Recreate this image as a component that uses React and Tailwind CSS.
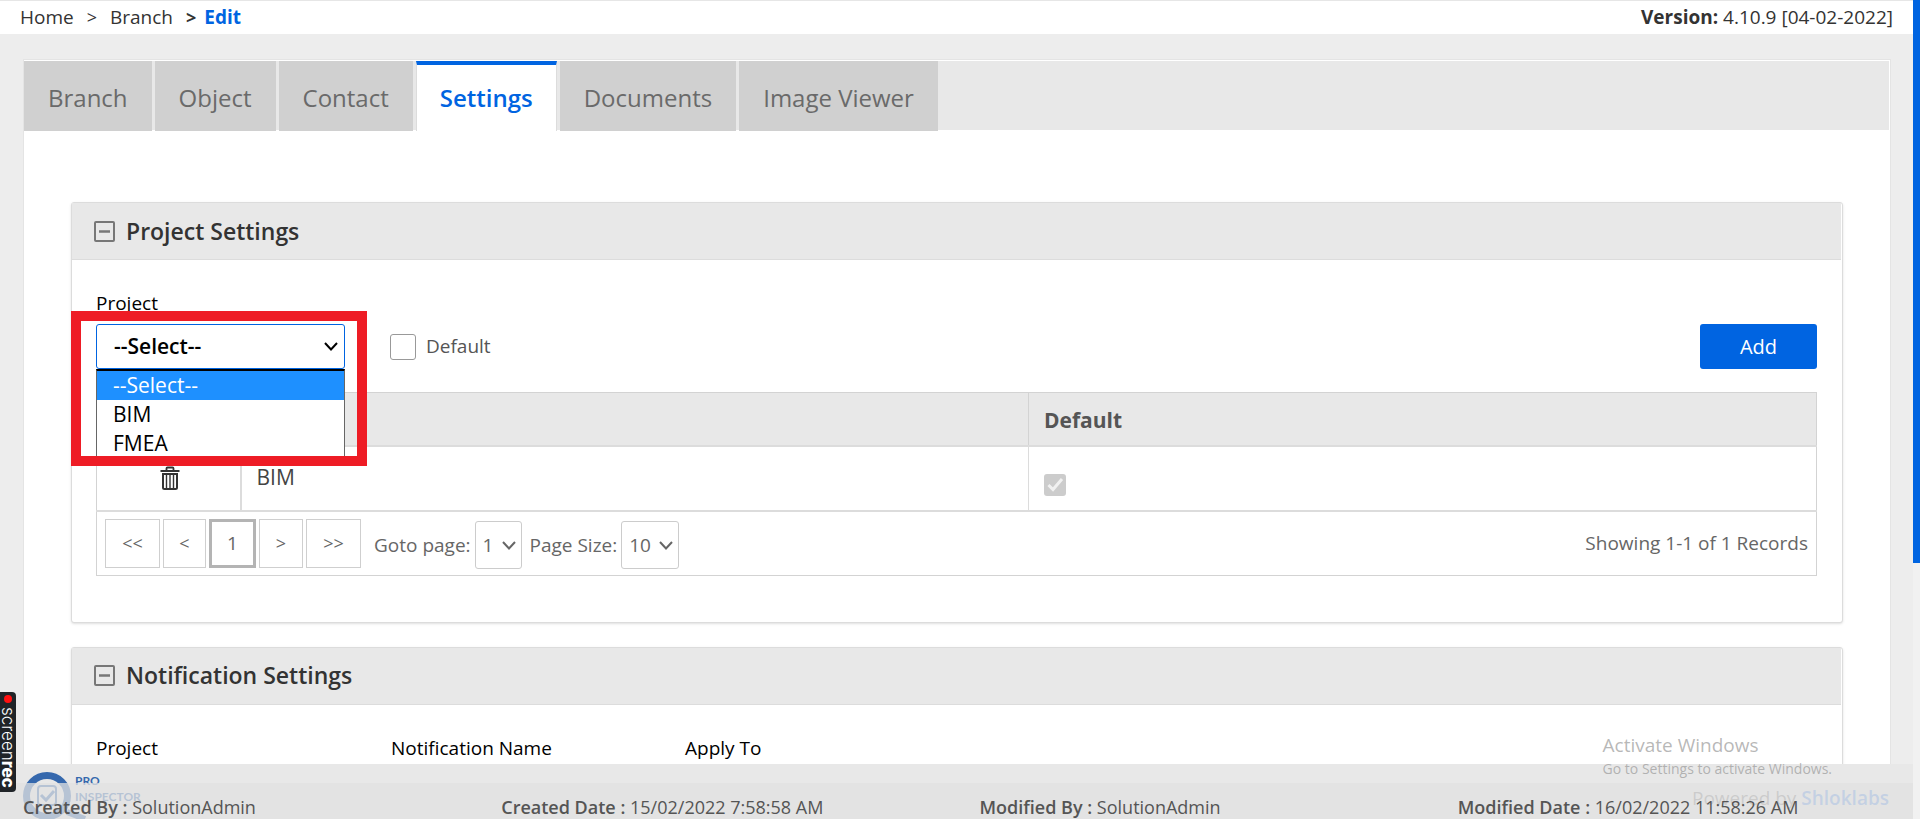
const tabs = ["Branch", "Object", "Contact", "Settings", "Documents", "Image Viewer"];
const pagerButton = "h-[49px] border border-[#cfcfcf] bg-white text-lg text-[#666]";

function CollapseIcon() {
  return (
    <svg viewBox="0 0 21 21" className="size-[21px]" fill="none" stroke="#777" strokeWidth="2" aria-hidden="true">
      <rect x="1" y="1" width="19" height="19" rx="1" />
      <path d="M5 10.5H16" strokeWidth="2.5" />
    </svg>
  );
}

function TrashIcon() {
  return (
    <svg viewBox="0 0 20 24" className="h-6 w-5" fill="none" stroke="#333" strokeWidth="2" aria-hidden="true">
      <path d="M0.5 5H19.5" />
      <path d="M6.500 5V2.500Q6.500 1.500 7.500 1.500H12.500Q13.500 1.500 13.500 2.500V5" strokeWidth="1.8" />
      <path d="M3 8V21.500Q3 23 4.500 23H15.500Q17 23 17 21.500V8Z" />
      <path d="M6.500 8V22M10 8V22M13.500 8V22" strokeWidth="1.4" />
    </svg>
  );
}

function Chevron() {
  return (
    <svg viewBox="0 0 14 9" className="h-[9px] w-[14px]" fill="none" stroke="currentColor" strokeWidth="2" aria-hidden="true">
      <path d="M1 1L7 7.5L13 1" />
    </svg>
  );
}

function Card({ title, children, className = "" }) {
  return (
    <section className={`rounded-[3px] border border-[#dcdcdc] bg-white shadow-sm ${className}`}>
      <h2 className="mr-px flex h-[57px] items-center gap-[11px] border-b border-[#dcdcdc] bg-[#e8e8e8] pl-[22px] text-[23px] font-semibold text-[#333]">
        <CollapseIcon />
        {title}
      </h2>
      {children}
    </section>
  );
}

function PageSelect({ id, label, value, className }) {
  return (
    <div className="flex items-center gap-1">
      <label htmlFor={id}>{label}</label>
      <div className="relative flex items-center">
        <select id={id} defaultValue={value} className={`h-12 appearance-none rounded-[3px] border border-[#ccc] bg-white pl-[7px] ${className}`}>
          <option>{value}</option>
        </select>
        <span className="pointer-events-none absolute right-[6px]"><Chevron /></span>
      </div>
    </div>
  );
}

export default function App() {
  return (
    <div className="relative flex h-screen overflow-hidden bg-[#ededed] font-['Open_Sans',sans-serif] text-[19px] text-black">
      <div className="flex min-w-0 flex-1 flex-col">
        <header className="flex h-[34px] shrink-0 items-start justify-between border-t border-[#e6e6e6] bg-white px-5 leading-8 text-[#333]">
          <nav className="flex">
            <a href="#home">Home</a>
            <span className="px-[13px] text-lg leading-8">&gt;</span>
            <a href="#branch">Branch</a>
            <span className="pr-2 pl-[13px] text-lg leading-8 font-bold">&gt;</span>
            <a href="#edit" className="font-bold text-[#0064e1]">Edit</a>
          </nav>
          <p><b>Version:</b> 4.10.9 [04-02-2022]</p>
        </header>

        <main className="mt-[25px] mr-[22px] ml-[23px] min-h-0 flex-1 overflow-hidden border border-b-0 border-[#e4e4e4] bg-white">
          <nav className="mt-px mr-px flex h-[69px] gap-[3px] bg-[#e8e8e8] text-2xl text-[#6a6a6a]">
            {tabs.map((tab) =>
              tab === "Settings" ? (
                <a key={tab} href="#settings" aria-current="page" className="flex h-[70px] items-center border-x border-t-4 border-x-[#dcdcdc] border-t-[#0064e1] bg-white px-[23px] font-semibold text-[#0064e1]">{tab}</a>
              ) : (
                <a key={tab} href="#tab" className="flex h-[70px] items-center bg-[#d0d0d0] px-6 pt-1">{tab}</a>
              )
            )}
          </nav>

          <div className="px-[47px] pt-[72px]">
            <Card title="Project Settings">
              <div className="pt-[29px] pr-[25px] pb-[46px] pl-6">
                <label htmlFor="project" className="block leading-7">Project</label>
                <div className="mt-[7px] flex items-center">
                  <div className="relative w-[249px]">
                    <select id="project" defaultValue="--Select--" className="block h-[45px] w-full appearance-none rounded-[3px] border border-[#0064e1] bg-white pl-[17px] text-[21px] font-semibold">
                      <option>--Select--</option>
                      <option>BIM</option>
                      <option>FMEA</option>
                    </select>
                    <span className="pointer-events-none absolute top-[18px] right-[7px]"><Chevron /></span>
                    <ul className="absolute top-[45px] left-0 z-10 h-[97px] w-full border border-t-2 border-[#666] border-t-black bg-white text-[21px] leading-[29px]">
                      <li className="bg-[#1e90ff] pl-4 text-white">--Select--</li>
                      <li className="pl-4">BIM</li>
                      <li className="pl-4">FMEA</li>
                    </ul>
                    <div className="pointer-events-none absolute -top-[13px] -left-[25px] z-20 h-[155px] w-[296px] border-10 border-[#ee1c25]" />
                  </div>
                  <label className="ml-[45px] flex items-center gap-[10px] text-[#555]">
                    <input type="checkbox" className="size-[26px] appearance-none rounded-[3px] border border-[#999] bg-white" />
                    Default
                  </label>
                  <button type="button" className="ml-auto h-[45px] w-[117px] rounded-[3px] bg-[#0064e1] text-xl text-white">Add</button>
                </div>

                <table className="mt-[23px] w-full table-fixed border-collapse border border-[#d3d3d3] text-left text-[21px]">
                  <colgroup>
                    <col className="w-[144px]" />
                    <col />
                    <col />
                  </colgroup>
                  <thead>
                    <tr className="h-[53px] border-b-2 border-[#dcdcdc] bg-[#e8e8e8] text-[#555]">
                      <th scope="col" aria-label="Delete" />
                      <th scope="col" aria-label="Project" />
                      <th scope="col" className="border-l border-[#d3d3d3] pt-1 pl-[15px] font-bold">Default</th>
                    </tr>
                  </thead>
                  <tbody>
                    <tr className="h-[65px] border-b-2 border-[#dcdcdc] text-[#444]">
                      <td className="border-r-2 border-[#dcdcdc] pl-[3px]">
                        <button type="button" aria-label="Delete" className="mx-auto block"><TrashIcon /></button>
                      </td>
                      <td className="pl-[15px]">BIM</td>
                      <td className="border-l border-[#dcdcdc] pt-[14px] pl-[15px]">
                        <span className="relative flex size-[22px]">
                          <input type="checkbox" checked disabled readOnly aria-label="BIM default" className="size-[22px] appearance-none rounded-[3px] bg-[#ccc]" />
                          <svg viewBox="0 0 22 22" className="absolute inset-0" fill="none" stroke="#f1f1f1" strokeWidth="3" aria-hidden="true"><path d="M4.500 11L9 15.500L18 5" /></svg>
                        </span>
                      </td>
                    </tr>
                  </tbody>
                </table>
                <div className="flex h-16 items-center border border-t-0 border-[#d3d3d3] px-2 text-[#666]">
                  <div className="flex gap-[3px]">
                    <button type="button" className={`w-[55px] ${pagerButton}`}>&lt;&lt;</button>
                    <button type="button" className={`w-[43px] ${pagerButton}`}>&lt;</button>
                    <button type="button" className="h-[49px] w-[47px] border-3 border-[#b4b4b4] bg-white">1</button>
                    <button type="button" className={`w-[44px] ${pagerButton}`}>&gt;</button>
                    <button type="button" className={`w-[55px] ${pagerButton}`}>&gt;&gt;</button>
                  </div>
                  <div className="ml-[13px] flex gap-2 pt-1">
                    <PageSelect id="page" label="Goto page:" value="1" className="w-[47px]" />
                    <PageSelect id="size" label="Page Size:" value="10" className="w-[58px]" />
                  </div>
                  <p className="ml-auto">Showing 1-1 of 1 Records</p>
                </div>
              </div>
            </Card>

            <Card title="Notification Settings" className="mt-6">
              <div className="grid h-48 grid-cols-[295px_294px_1fr] px-6 pt-[29px] leading-7">
                <span>Project</span>
                <span>Notification Name</span>
                <span>Apply To</span>
              </div>
            </Card>
          </div>
        </main>

        <footer className="relative h-[55px] shrink-0 bg-[#e8e8e8]">
          <div className="flex items-start justify-between pr-6 pl-[23px]">
            <div className="flex pt-2">
              <svg viewBox="0 0 66 47" className="h-[47px] w-[66px]" fill="none" aria-hidden="true">
                <path d="M44 40L62 47" stroke="#3568ad" strokeWidth="6" />
                <circle cx="24" cy="24" r="20.500" stroke="#3568ad" strokeWidth="7" />
                <rect x="15" y="14" width="18" height="19" rx="3" stroke="#3568ad" strokeWidth="2" />
                <path d="M18 23L23 28L31 19" stroke="#3568ad" strokeWidth="3" />
              </svg>
              <p className="-ml-[14px] pt-px font-['Lato',sans-serif] text-xs leading-4 font-bold text-[#3568ad]">PRO<br />INSPECTOR</p>
            </div>
            <p className="pt-[18px] leading-8 text-[#888]">Powered by <a href="#shloklabs" className="font-semibold text-[#6b9ce8]">Shloklabs</a></p>
          </div>
          <div className="absolute inset-x-0 bottom-0 flex h-9 items-center bg-[#e1e1e1]/75 pt-3 text-lg text-[#555]">
            <p className="w-1/4 pl-[23px]"><b className="font-semibold">Created By :</b> SolutionAdmin</p>
            <p className="w-1/4 pl-[23px]"><b className="font-semibold">Created Date :</b> 15/02/2022 7:58:58 AM</p>
            <p className="w-1/4 pl-[23px]"><b className="font-semibold">Modified By :</b> SolutionAdmin</p>
            <p className="w-1/4 pl-[23px]"><b className="font-semibold">Modified Date :</b> 16/02/2022 11:58:26 AM</p>
          </div>
        </footer>
      </div>

      <div className="w-[7px] shrink-0 bg-[#f1f1f1]"><div className="h-[563px] bg-[#0064e1]" /></div>

      <div className="pointer-events-none absolute right-[88px] bottom-[40px] text-[#999]/70">
        <p className="leading-7">Activate Windows</p>
        <p className="text-sm leading-5">Go to Settings to activate Windows.</p>
      </div>
      <div className="absolute bottom-[27px] left-0 flex h-[100px] w-4 flex-col items-center rounded-r-[4px] bg-[#202428] pt-[3px] font-['Inter',sans-serif] text-[17px] leading-4 text-white">
        <span className="size-2 shrink-0 rounded-full bg-[#ff1010]" />
        <span className="mt-1 font-light [writing-mode:vertical-rl]">screen<b className="font-extrabold">rec</b></span>
      </div>
    </div>
  );
}
